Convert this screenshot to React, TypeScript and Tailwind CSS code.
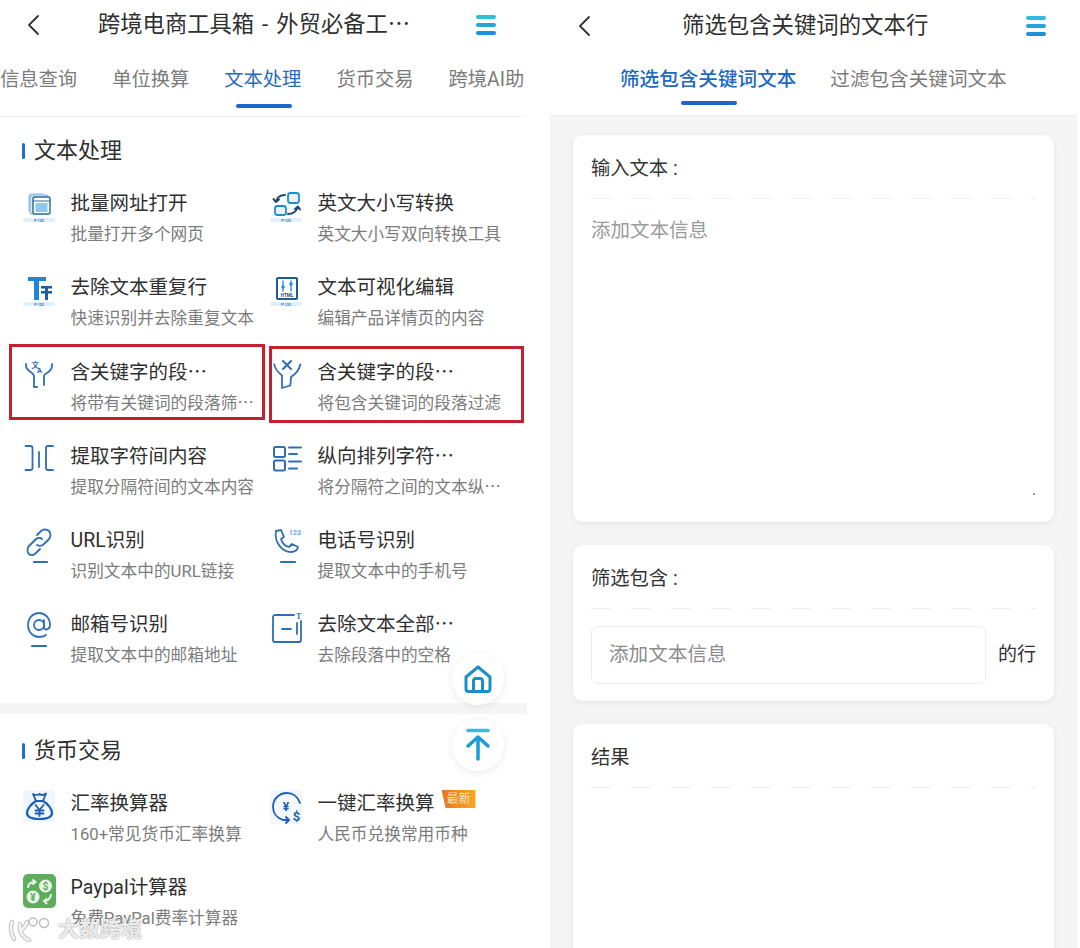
import React from "react";

const blue = "#2f6fb8";

const Caption = () => (
  <>
    <rect x="3" y="29" width="32" height="4" rx="2" fill="#e2f0fb" stroke="none" />
    <text x="19" y="32.500" textAnchor="middle" fontSize="3.600" fontWeight="700" fill={blue} stroke="none" fontFamily="Roboto">
      P·123
    </text>
  </>
);

const Svg = ({ children }: { children: React.ReactNode }) => (
  <svg viewBox="0 0 38 42" className="h-[42px] w-[38px] shrink-0" fill="none" stroke={blue} strokeWidth="1.800" strokeLinecap="round" strokeLinejoin="round">
    {children}
  </svg>
);

const icons: Record<string, React.ReactNode> = {
  pages: (
    <Svg>
      <rect x="8" y="4" width="17" height="19" rx="3" fill="#bfdcf6" stroke="none" />
      <rect x="10" y="6" width="18" height="19" rx="2.500" fill="#dcecfa" stroke="#7db4e6" strokeWidth="1.200" />
      <rect x="13" y="8" width="17" height="17" rx="1.500" fill="#fff" stroke="#2b6f9e" strokeWidth="1.500" />
      <path d="M13 12h17" stroke="#2b6f9e" strokeWidth="1.200" />
      <rect x="15.500" y="14" width="12" height="9" fill="#93c5f0" stroke="none" />
      <Caption />
    </Svg>
  ),
  caseSwap: (
    <Svg>
      <rect x="21" y="4" width="11" height="10" rx="2.500" fill="#e6f1fa" stroke="#1f8ecf" />
      <rect x="8" y="17" width="11" height="9" rx="2.500" fill="#e6f1fa" stroke="#1f8ecf" />
      <path d="M18 6c-5 0-8 2-9 7M6.500 10l2.500 3 3-2.500" stroke="#1f4a72" strokeWidth="2" />
      <path d="M21 25c5 0 8-2 10-7M28 20l3-2.500 2 3" stroke="#1f4a72" strokeWidth="2" />
      <Caption />
    </Svg>
  ),
  dedupe: (
    <Svg>
      <path d="M8 4h18v4h-7v19h-5V8H8z" fill="#1f86d6" stroke="none" />
      <path d="M21 13h11v2.500h-4v2.500h4v2.500h-4V27h-3v-6.500h-4V18h4v-2.500h-4z" fill="#1d5f9f" stroke="none" />
      <Caption />
    </Svg>
  ),
  html: (
    <Svg>
      <rect x="10" y="5" width="20" height="21" rx="1" stroke="#1f5a92" strokeWidth="2" />
      <path d="M16 8v10M24 8v10" stroke="#2f8fd0" strokeWidth="1.400" />
      <circle cx="16" cy="14" r="1.800" fill="#2f8fd0" stroke="none" />
      <circle cx="24" cy="11" r="1.800" fill="#2f8fd0" stroke="none" />
      <text x="20" y="24" textAnchor="middle" fontSize="4.500" fontWeight="700" fill="#1f4a72" stroke="none" fontFamily="Roboto">HTML</text>
      <Caption />
    </Svg>
  ),
  filterText: (
    <Svg>
      <path d="M6 6v2c0 3 3 5 6 7 1 1 2 2 2 3v11h3" />
      <path d="M32 6v2c0 3-2 5-5 7-2 1-3 2-3 3v9" />
      <text x="11.500" y="10" fontSize="7.500" fontWeight="700" fill={blue} stroke="none" fontFamily="Noto Sans CJK SC">文</text>
      <text x="17" y="15" fontSize="7.500" fontWeight="700" fill={blue} stroke="none" fontFamily="Roboto">A</text>
    </Svg>
  ),
  filterX: (
    <Svg>
      <path d="M7.300 6.500c.7 5 4 8 7.700 11v12.500l8.300-2.500.7-8.500c4-3 8-6 9.300-12.500" />
      <path d="M16 3l8 8M24 3l-8 8" strokeWidth="2" />
    </Svg>
  ),
  between: (
    <Svg>
      <path d="M5.500 4h5c1.500 0 2 .5 2 2v20c0 1.500-.5 2-2 2h-5" />
      <path d="M19 10v15" />
      <path d="M33 4h-5c-1.500 0-2 .5-2 2v20c0 1.500.5 2 2 2h5" />
    </Svg>
  ),
  list: (
    <Svg>
      <rect x="7" y="5" width="11" height="10" rx="1.500" strokeWidth="2" />
      <rect x="7" y="18.500" width="11" height="10" rx="1.500" strokeWidth="2" />
      <path d="M22 5.500h12M22 12h8M22 19.500h12M22 26.500h8" strokeWidth="2" />
    </Svg>
  ),
  link: (
    <Svg>
      <path d="M17 9l4-4c2-2 6-2 8 0s2 6 0 8l-5 5c-2 2-5 2-7 1" />
      <path d="M22 13c-2-2-5-1-7 1l-6 6c-2 2-2 6 0 8s5 1 7-1l4-4" />
      <path d="M14 36h13" strokeWidth="2.200" />
    </Svg>
  ),
  phone: (
    <Svg>
      <path d="M9 5l5-1 3 7-3 2c1 4 4 7 8 8l3-3 6 3c-1 4-3 5-7 5C15 26 7 16 9 5z" />
      <path d="M14 36h14" strokeWidth="2.200" />
      <text x="22" y="9" fontSize="7" fontWeight="700" fill="#6aa7dc" stroke="none" fontFamily="Roboto">123</text>
    </Svg>
  ),
  at: (
    <Svg>
      <circle cx="19" cy="15" r="5" />
      <path d="M24 10v7c0 4 6 3 6-2 0-7-5-12-11-12S8 8 8 15s5 12 11 12c3 0 5-.5 7-2" />
      <path d="M12 36h14" strokeWidth="2.200" />
    </Svg>
  ),
  space: (
    <Svg>
      <path d="M27 5H8C7 5 6 6 6 7v23c0 1 1 2 2 2h24c1 0 2-1 2-2V11" />
      <path d="M15 19h9M30 13v11" />
      <text x="29" y="9" fontSize="8" fontWeight="700" fill={blue} stroke="none" fontFamily="Liberation Serif">T</text>
    </Svg>
  ),
  moneyBag: (
    <Svg>
      <rect x="3" y="1" width="32" height="32" rx="3" fill="#eff6fd" stroke="none" />
      <path d="M13 5c3 1.500 4 1.500 6.500 0 2 1.500 4 1.500 6.500-.5l-3 7.500h-7z" stroke="#1c5fb0" strokeWidth="1.800" />
      <path d="M16 12c-5 3-9 8-9 12 0 4 5 6 12.500 6S32 28 32 24c0-4-4-9-9-12" stroke="#1c5fb0" strokeWidth="2.200" />
      <path d="M15.500 16l4 5 4-5M19.500 21v6M15.500 21.500h8M15.500 24.500h8" stroke="#1c5fb0" strokeWidth="1.800" />
    </Svg>
  ),
  exchange: (
    <Svg>
      <rect x="3" y="1" width="32" height="34" rx="3" fill="#f3f8fd" stroke="none" />
      <path d="M33 14C31 8 26 4 20 4 12 4 6 10 6 18c0 6 4 11 10 13h5" stroke="#1c5fb0" strokeWidth="1.800" />
      <path d="M19 28l3 3-3 3" stroke="#1c5fb0" strokeWidth="1.800" />
      <text x="19" y="22" textAnchor="middle" fontSize="12" fontWeight="700" fill="#1c5fb0" stroke="none" fontFamily="Roboto">¥</text>
      <text x="29.500" y="32" textAnchor="middle" fontSize="13" fontWeight="700" fill="#1c5fb0" stroke="none" fontFamily="Roboto">$</text>
    </Svg>
  ),
  paypal: (
    <svg viewBox="0 0 38 42" className="h-[42px] w-[38px] shrink-0">
      <rect x="3" y="1" width="33" height="34" rx="5" fill="#5cae5c" />
      <circle cx="25.500" cy="13" r="6.500" fill="#e9f6e9" />
      <circle cx="13" cy="24" r="6.500" fill="#e9f6e9" />
      <text x="25.500" y="17" textAnchor="middle" fontSize="10" fontWeight="700" fill="#5cae5c" fontFamily="Roboto">$</text>
      <text x="13" y="28" textAnchor="middle" fontSize="10" fontWeight="700" fill="#5cae5c" fontFamily="Roboto">¥</text>
      <path d="M8 15c0-4 3-6 7-6M12.500 6.500 15.500 9l-3 2.500M31 21c0 4-3 7-7 7M27 31l-3-3 3-2.500" fill="none" stroke="#e9f6e9" strokeWidth="2" />
    </svg>
  ),
};

type Tool = { icon: string; title: string; desc: string; mark?: string; isNew?: boolean };

const textTools: Tool[] = [
  { icon: "pages", title: "批量网址打开", desc: "批量打开多个网页" },
  { icon: "caseSwap", title: "英文大小写转换", desc: "英文大小写双向转换工具" },
  { icon: "dedupe", title: "去除文本重复行", desc: "快速识别并去除重复文本" },
  { icon: "html", title: "文本可视化编辑", desc: "编辑产品详情页的内容" },
  { icon: "filterText", title: "含关键字的段⋯", desc: "将带有关键词的段落筛⋯", mark: "left-[-11px] top-[-14px] h-[76px] w-[256px]" },
  { icon: "filterX", title: "含关键字的段⋯", desc: "将包含关键词的段落过滤", mark: "left-[2px] top-[-12px] h-[77px] w-[255px]" },
  { icon: "between", title: "提取字符间内容", desc: "提取分隔符间的文本内容" },
  { icon: "list", title: "纵向排列字符⋯", desc: "将分隔符之间的文本纵⋯" },
  { icon: "link", title: "URL识别", desc: "识别文本中的URL链接" },
  { icon: "phone", title: "电话号识别", desc: "提取文本中的手机号" },
  { icon: "at", title: "邮箱号识别", desc: "提取文本中的邮箱地址" },
  { icon: "space", title: "去除文本全部⋯", desc: "去除段落中的空格" },
];

const moneyTools: Tool[] = [
  { icon: "moneyBag", title: "汇率换算器", desc: "160+常见货币汇率换算" },
  { icon: "exchange", title: "一键汇率换算", desc: "人民币兑换常用币种", isNew: true },
  { icon: "paypal", title: "Paypal计算器", desc: "免费PayPal费率计算器" },
];

const Back = () => (
  <svg viewBox="0 0 14 22" className="h-[22px] w-[14px]" fill="none" stroke="#333" strokeWidth="1.800" strokeLinecap="round" strokeLinejoin="round">
    <path d="M12 2 3 11l9 9" />
  </svg>
);

const Menu = () => (
  <div className="flex w-[20px] flex-col gap-[4px]">
    <div className="h-[4px] rounded-full bg-[#31bdd9]" />
    <div className="h-[4px] rounded-full bg-[#25a6da]" />
    <div className="h-[4px] rounded-full bg-[#1f8fd6]" />
  </div>
);

const ToolItem = ({ tool }: { tool: Tool }) => (
  <div className="relative flex h-[84.250px] gap-[12.500px]">
    {tool.mark && <div className={`absolute border-[3px] border-[#c5202f] ${tool.mark}`} />}
    <div className="shrink-0">{icons[tool.icon]}</div>
    <div className="min-w-0 pt-[1px]">
      <div className="flex items-start">
        <div className="text-[19.500px] leading-[28px] text-[#2f2f2f]">{tool.title}</div>
        {tool.isNew && (
          <div className="ml-[7px] flex h-[18px] w-[34px] items-center justify-center bg-[linear-gradient(90deg,#e8761c,#f6a823)] text-[12px] leading-none text-[#ffe3bb] [clip-path:polygon(0_0,100%_0,100%_100%,12%_100%)]">
            最新
          </div>
        )}
      </div>
      <div className="mt-[5px] whitespace-nowrap text-[16.700px] leading-[24px] text-[#7c7c7c]">{tool.desc}</div>
    </div>
  </div>
);

const Section = ({ title, tools, className }: { title: string; tools: Tool[]; className: string }) => (
  <section className={className}>
    <div className="flex h-[36px] items-center gap-[9px] pl-[22px]">
      <div className="h-[16px] w-[3px] rounded-sm bg-[#1f6fd0]" />
      <h2 className="text-[22px] leading-[38px] text-[#2f2f2f]">{title}</h2>
    </div>
    <div className="mt-[20px] grid grid-cols-[247px_1fr] pl-[20px]">
      {tools.map((t, i) => (
        <ToolItem key={i} tool={t} />
      ))}
    </div>
  </section>
);

const RoundBtn = ({ children, className }: { children: React.ReactNode; className: string }) => (
  <div className={`absolute flex h-[52px] w-[52px] items-center justify-center rounded-full bg-white shadow-[0_2px_8px_rgba(0,0,0,0.08)] ${className}`}>
    {children}
  </div>
);

const CardHead = ({ label }: { label: string }) => (
  <>
    <div className="mx-[18px] flex h-[63px] items-center pt-[5px] text-[19.300px] text-[#333]">{label}</div>
    <div className="mx-[18px] h-px bg-[repeating-linear-gradient(90deg,#eeeeee_0,#eeeeee_20px,transparent_20px,transparent_40px)]" />
  </>
);

export default function App() {
  return (
    <div className="flex h-[948px] w-[1080px] overflow-hidden bg-white font-['Roboto','Noto_Sans_CJK_SC',sans-serif]">
      {/* tool list */}
      <div className="relative h-full w-[527px] shrink-0 overflow-hidden">
        <div className="flex h-[49px] items-center">
          <div className="ml-[26px]"><Back /></div>
          <div className="ml-[58px] w-[342px] whitespace-nowrap text-[22.300px] text-[#2f2f2f] [word-spacing:2.500px]">跨境电商工具箱 - 外贸必备工⋯</div>
          <div className="ml-[36px]"><Menu /></div>
        </div>
        <div className="relative h-[68px] border-b border-[#f3f3f3]">
          <div className="flex gap-[35px] overflow-hidden whitespace-nowrap pt-[16px] text-[19.300px] leading-[30px] text-[#7b7b7b]">
            <span>信息查询</span>
            <span>单位换算</span>
            <span className="text-[#2a6ab8]">文本处理</span>
            <span>货币交易</span>
            <span>跨境AI助</span>
          </div>
          <div className="absolute left-[236px] top-[55px] h-[4px] w-[56px] rounded-full bg-[#1a66cc]" />
        </div>
        <Section title="文本处理" tools={textTools} className="pt-[16px]" />
        <div className="mt-[8px] h-[11px] bg-[#f5f5f5]" />
        <Section title="货币交易" tools={moneyTools} className="pt-[19.500px]" />

        <RoundBtn className="left-[452px] top-[653px]">
          <svg viewBox="0 0 30 30" className="h-[30px] w-[30px]" fill="none" stroke="#1c8fc4" strokeWidth="3" strokeLinejoin="round" strokeLinecap="round">
            <path d="M3 13 15 3l12 10v12c0 1.500-1 2.500-2.500 2.500h-19C4 27.500 3 26.500 3 25z" />
            <path d="M10.500 27V17c0-1.500 1-2.500 2.500-2.500h4c1.500 0 2.500 1 2.500 2.500v10" />
          </svg>
        </RoundBtn>
        <RoundBtn className="left-[452px] top-[719px]">
          <svg viewBox="0 0 30 34" className="h-[34px] w-[30px]" fill="none" stroke="#1c9bd6" strokeWidth="3.500" strokeLinecap="round" strokeLinejoin="round">
            <path d="M5 2.500h20" stroke="#2fc0dc" />
            <path d="M15 31V10M5 18l10-9 10 9" />
          </svg>
        </RoundBtn>

        {/* watermark */}
        <div className="absolute left-[8px] top-[914px] flex items-center gap-[8px]">
          <svg viewBox="0 0 42 26" className="h-[26px] w-[42px]" fill="none" strokeLinecap="round">
            <g stroke="#c4c4c4" strokeWidth="4.500">
              <path d="M4 6c-2 6-1 12 2 17M12 8c-1 7 2 13 9 16M13 14c3-2 5-5 6-8" />
            </g>
            <g stroke="#f4f4f4" strokeWidth="2.500">
              <path d="M4 6c-2 6-1 12 2 17M12 8c-1 7 2 13 9 16M13 14c3-2 5-5 6-8" />
            </g>
            <circle cx="25" cy="6" r="4" stroke="#bdbdbd" strokeWidth="1.500" fill="#fff" />
            <circle cx="36" cy="7" r="4.500" stroke="#bdbdbd" strokeWidth="1.500" fill="#fff" />
          </svg>
          <span className="text-[21px] font-bold leading-[30px] text-[#ececec] [text-shadow:0_0_2px_#8a8a8a]">大数跨境</span>
        </div>
      </div>

      {/* filter page */}
      <div className="ml-[23px] h-full w-[527px] shrink-0 overflow-hidden">
        <div className="flex h-[52px] items-center">
          <div className="ml-[27px]"><Back /></div>
          <div className="ml-[91px] w-[246px] whitespace-nowrap text-[22.400px] text-[#2f2f2f]">筛选包含关键词的文本行</div>
          <div className="ml-[98px]"><Menu /></div>
        </div>
        <div className="relative h-[63px]">
          <div className="flex gap-[34px] whitespace-nowrap pl-[70px] pt-[13px] text-[19.600px] leading-[30px] text-[#7b7b7b]">
            <span className="font-medium text-[#2368c0]">筛选包含关键词文本</span>
            <span>过滤包含关键词文本</span>
          </div>
          <div className="absolute left-[131px] top-[49px] h-[4px] w-[56px] rounded-full bg-[#1a66cc]" />
        </div>
        <div className="flex h-full flex-col gap-[23px] bg-[#f5f5f5] px-[23px] pt-[20px] shadow-[inset_0_3px_3px_-2px_rgba(0,0,0,0.04)]">
          <div className="relative h-[387px] rounded-[10px] bg-white shadow-[0_2px_6px_rgba(0,0,0,0.07)]">
            <CardHead label="输入文本 :" />
            <div className="px-[18px] pt-[17px] text-[19.500px] leading-[30px] text-[#9a9a9a]">添加文本信息</div>
            <div className="absolute bottom-[27px] right-[19px] h-[2px] w-[2px] rounded-full bg-[#777]" />
          </div>
          <div className="h-[156px] rounded-[10px] bg-white shadow-[0_2px_6px_rgba(0,0,0,0.07)]">
            <CardHead label="筛选包含 :" />
            <div className="mx-[18px] mt-[17px] flex items-center gap-[12px]">
              <div className="flex h-[58px] w-[395px] items-center rounded-[6px] border border-[#ececec] pl-[17px] text-[19.600px] text-[#8c8c8c]">添加文本信息</div>
              <span className="whitespace-nowrap text-[19px] text-[#333]">的行</span>
            </div>
          </div>
          <div className="h-[300px] rounded-[10px] bg-white shadow-[0_2px_6px_rgba(0,0,0,0.07)]">
            <CardHead label="结果" />
          </div>
        </div>
      </div>
    </div>
  );
}
